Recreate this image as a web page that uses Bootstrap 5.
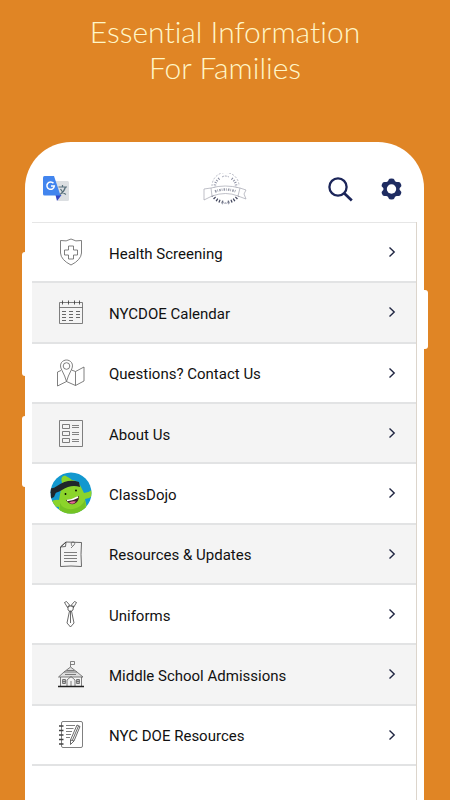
<!DOCTYPE html>
<html lang="en">
<head>
<meta charset="utf-8">
<meta name="viewport" content="width=device-width, initial-scale=1">
<title>Essential Information For Families</title>
<link rel="stylesheet" href="https://cdn.jsdelivr.net/npm/bootstrap@5.3.0/dist/css/bootstrap.min.css">
<style>
body { background: #e08525; font-family: Roboto, "Liberation Sans", sans-serif; }
.promo-title { color: #fff6c8; font: 300 30px/36px Lato, "Open Sans", sans-serif; font-variant-ligatures: none; padding: 13px 16px 57px; }
.phone { background: #fff; margin: 0 26px 0 25px; padding: 0 7px; border-radius: 46px 46px 0 0; }
.side-key { background: #fff; position: absolute; width: 8px; border-radius: 3px; }
.key-up { left: -3px; top: 110px; height: 124px; }
.key-down { left: -3px; top: 274px; height: 71px; }
.key-power { right: -4px; top: 148px; height: 59px; }
.app-bar { display: grid; grid-template-columns: 1fr auto 1fr; height: 80px; padding-top: 14px; }
.translate-tool { padding-left: 11px; }
.tools { gap: 28px; padding-right: 15px; }
.app-screen { border-right: 1px solid #dcd5cc; }
.menu-list { display: grid; grid-auto-rows: 1fr; min-height: 544px; border-top: 1px solid #e6e6e6; }
.menu-row { gap: 17px; padding: 0 20px 0 18px; color: #111; font-size: 15px; line-height: 20px; border-bottom: 2px solid #e2e3e4; }
.menu-row:nth-child(even) { background: #f4f4f4; }
.menu-row:hover { color: #111; }
.row-label { padding-top: 3px; }
.line-art { fill: none; stroke: #606060; stroke-width: .8; stroke-linejoin: round; }
svg { display: block; flex: none; }
</style>
<script src="https://cdn.jsdelivr.net/npm/bootstrap@5.3.0/dist/js/bootstrap.bundle.min.js"></script>
</head>
<body class="min-vh-100 d-flex flex-column">
<svg width="0" height="0" class="position-absolute" aria-hidden="true"><symbol id="chevron" viewBox="0 0 8 12"><path d="M1.500 1.500 6.200 6l-4.700 4.500" fill="none" stroke="#202642" stroke-width="1.400"/></symbol></svg>
<h1 class="promo-title text-center m-0">Essential Information<br>For Families</h1>
<main class="phone position-relative flex-grow-1 d-flex flex-column">
  <span class="side-key key-up"></span><span class="side-key key-down"></span><span class="side-key key-power"></span>
  <header class="app-bar align-items-center">
    <div class="translate-tool d-flex">
      <button type="button" class="btn p-0 border-0" aria-label="Translate">
        <svg width="26" height="26" viewBox="0 0 26 26">
          <path d="M11 5h13.500q1.500 0 1.500 1.500v17q0 1.500-1.500 1.500H15z" fill="#dcdfe2"/>
          <path d="M12.500 19h6L14 25z" fill="#3547c6"/>
          <path d="M1.500 0H11l6.500 19.500h-16Q0 19.500 0 18V1.500Q0 0 1.500 0z" fill="#4285ee"/>
          <path d="M10.500 7.300A3.700 3.700 0 1 0 11.300 10H8" fill="none" stroke="#fff" stroke-width="1.500"/>
          <path d="M15.500 11h8.500M19.500 9v2M22.500 11q-1.500 5-5.500 7.500M17.500 13q2 4 5.500 5.500" fill="none" stroke="#59717c" stroke-width="1.200"/>
        </svg>
      </button>
    </div>
    <svg width="44" height="32" viewBox="0 0 44 32" role="img" aria-label="School emblem">
      <g fill="none" stroke="#a5a8b6">
        <path d="M9 13a13.500 13.500 0 0 1 27 0" stroke-width=".8" stroke-dasharray="2 1.500"/>
        <path d="M12 15q-1-6 5-10M33 15q1-6-5-10" stroke="#8a8da0" stroke-width="2.500" stroke-dasharray="1 1.500"/>
        <path d="M9.500 22q3 6 12 7.500M35.500 22q-3 6-12 7.500" stroke="#44485f" stroke-width="3" stroke-dasharray="1.300 1.700"/>
        <path d="M19 4q3-2 7 0M19 29l7 2M26 29l-7 2" stroke-dasharray="2 1"/>
        <path d="M8 15q14-4 29 0l6 2-2 4 2 5-8-3q-12-5-26 0l-8 4V16l7-1zM8 15l1 8M37 15l-2 8" fill="#fff" stroke="#a4a5b0" stroke-width=".7"/>
        <path d="M12 18.500q10-4 21 0" stroke="#9598a6" stroke-width="2.500" stroke-dasharray="1.500 1 .7 1.200"/>
      </g>
    </svg>
    <div class="tools d-flex justify-content-end align-items-center">
      <button type="button" class="btn p-0 border-0" aria-label="Search">
        <svg width="25" height="25" viewBox="0 0 25 25" fill="none" stroke="#1b2559"><circle cx="10" cy="10" r="8.600" stroke-width="2.300"/><path d="m16.500 16.500 7.300 7" stroke-width="2.700"/></svg>
      </button>
      <button type="button" class="btn p-0 border-0" aria-label="Settings">
        <svg width="21" height="22" viewBox="0 0 21 22"><path d="M7.600 1.800Q8 .5 10.500.5t2.900 1.300l.6 1.400 1.600.9 1.600-.2c1.700-.1 2.200.8 2.700 2s.8 2.200-.3 3.200l-1 1.100v1.600l1 1.100c1.100 1 .8 2 .3 3.200s-1 2.100-2.700 2l-1.600-.2-1.600.9-.6 1.400q-.4 1.300-2.900 1.300t-2.900-1.300L7 18.800l-1.600-.9-1.600.2c-1.700.1-2.200-.8-2.700-2s-.8-2.200.3-3.200l1-1.100v-1.600l-1-1.100c-1.100-1-.8-2-.3-3.200s1-2.100 2.700-2l1.600.2L7 3.200z" fill="#1f2c61"/><circle cx="10.500" cy="11" r="4.700" fill="#fff"/></svg>
      </button>
    </div>
  </header>
  <div class="app-screen flex-grow-1">
  <nav class="menu-list" aria-label="Information">
    <a href="#" class="menu-row d-flex align-items-center text-decoration-none">
      <svg class="line-art" width="42" height="42" viewBox="0 0 42 42"><path d="M10.500 9.500q6 1.500 10.500-1.500 4.500 3 10.500 1.500V22q-.5 7-10.500 12Q11 29 10.500 22z"/><path d="M18.500 15h5v4h4v5h-4v4h-5v-4h-4v-5h4z"/></svg>
      <span class="row-label flex-grow-1">Health Screening</span><svg width="8" height="12"><use href="#chevron"/></svg>
    </a>
    <a href="#" class="menu-row d-flex align-items-center text-decoration-none">
      <svg class="line-art" width="42" height="42" viewBox="0 0 42 42"><path d="M9.500 11.500h23v21h-23zM9.500 16.500h23"/><path d="M12.500 9.500v4M18.500 9.500v4M24.500 9.500v4M29.500 9.500v4" stroke="#333"/><path d="M12 20.500h4m3 0h4m3 0h4M12 23.500h4m3 0h4m3 0h4M12 26.500h4m3 0h4m3 0h4M12 29.500h4m3 0h4" stroke="#444"/></svg>
      <span class="row-label flex-grow-1">NYCDOE Calendar</span><svg width="8" height="12"><use href="#chevron"/></svg>
    </a>
    <a href="#" class="menu-row d-flex align-items-center text-decoration-none">
      <svg class="line-art" width="42" height="42" viewBox="0 0 42 42"><path d="M11 18.500l-3.500 1.500v14l9-4.500 9 4 8.500-4.500V15l-8.500 4.500-4-1.500M25.500 19.500v14"/><path d="M16.500 29.500Q15 24 12 18.500c-4-7 1-10.500 4.500-10.500s8.500 3.500 4.500 10.500q-3 5.500-4.500 11z"/><circle cx="16.500" cy="14" r="3.300"/></svg>
      <span class="row-label flex-grow-1">Questions? Contact Us</span><svg width="8" height="12"><use href="#chevron"/></svg>
    </a>
    <a href="#" class="menu-row d-flex align-items-center text-decoration-none">
      <svg class="line-art" width="42" height="42" viewBox="0 0 42 42"><path d="M9.500 8.500h23v26h-23zM12.500 12.500h7v4h-7zM12.500 19.500h7v4h-7zM12.500 26.500h7v4h-7z"/><path d="M22 13.500h7m-7 2h7m-7 5h7m-7 2h7m-7 5h7m-7 2h7" stroke="#666"/></svg>
      <span class="row-label flex-grow-1">About Us</span><svg width="8" height="12"><use href="#chevron"/></svg>
    </a>
    <a href="#" class="menu-row d-flex align-items-center text-decoration-none">
      <svg width="42" height="42" viewBox="0 0 42 42"><defs><clipPath id="disc"><circle cx="21" cy="21" r="20.500"/></clipPath></defs>
        <g clip-path="url(#disc)"><path d="M0 0h42v42H0z" fill="#1298cf"/><path d="M12 11Q10 4 15 3.500q4 2 7 4.500 7 1 9 7l3 6q4 0 8-3v6q-3 3-7 3l2 9v8H8l1-9q-4-1-9 2v-7q5-3 9-2z" fill="#8bd42b"/><path d="M10 31q3 7 13 6 9-2 12-9l1 14H10z" fill="#75c324"/>
        <path d="M0 16q3 1 7-2Q18 6 29 10l1 5q-9-3-18 3-7 4-12 3z" fill="#20262b"/><path d="m1 19 7-3-4 9-4 2z" fill="#20262b"/>
        <path d="M16 28q7 0 13-4 0 6-5 8-5 1-8-4z" fill="#40202c"/><path d="M17 28.500q6-.5 11-3.500" fill="none" stroke="#fff" stroke-width="1.500"/><path d="M19 30.500q4-2 7-1-3 4-7 1z" fill="#e76d91"/><circle cx="15.500" cy="22" r=".9"/><circle cx="26" cy="18.500" r=".9"/></g></svg>
      <span class="row-label flex-grow-1">ClassDojo</span><svg width="8" height="12"><use href="#chevron"/></svg>
    </a>
    <a href="#" class="menu-row d-flex align-items-center text-decoration-none">
      <svg class="line-art" width="42" height="42" viewBox="0 0 42 42"><path d="M16 9l15.500.5-.5 12 .5 12-10.500-.5-10.500.5V14zM16 9l-.5 4.500-5 .5M10.500 14l5.500-5" stroke="#444"/><path d="M22 13q-2-4 1-4 3 0 1 3l-3 3M14 19.500h13m-13 3h13m-13 3h13m-13 3h13"/></svg>
      <span class="row-label flex-grow-1">Resources &amp; Updates</span><svg width="8" height="12"><use href="#chevron"/></svg>
    </a>
    <a href="#" class="menu-row d-flex align-items-center text-decoration-none">
      <svg class="line-art" width="42" height="42" viewBox="0 0 42 42"><path d="M14.500 9.500l2-1 3.500 4-2.500 2zM26.500 9.500l-2-1-3.500 4 2.500 2zM18 13h5.500l-.5 4-1.500 1h-2L18 17zM19.500 18l-2.500 12 3.500 4 3.500-4-2.500-12M20.500 18v12" stroke="#444"/></svg>
      <span class="row-label flex-grow-1">Uniforms</span><svg width="8" height="12"><use href="#chevron"/></svg>
    </a>
    <a href="#" class="menu-row d-flex align-items-center text-decoration-none">
      <svg class="line-art" width="42" height="42" viewBox="0 0 42 42"><path d="M20.500 14V8.500h4v3h-4" stroke="#666"/><path d="M14 19l6.500-5 6.500 5M14 19h13l6 5H8.500z" fill="#ddd"/><path d="M10.500 24v9M31.500 24v9M17 33v-6l4-3.500 4 3.500v6M21 33v-5M12.500 26.500h3v4h-3zM26.500 26.500h3v4h-3zM14 26v5M28 26v5M12.500 28.500h3M26.500 28.500h3M15 21.500h11M16.500 17.500h8"/><path d="M8 33.500h26" stroke="#222" stroke-width="1.500"/></svg>
      <span class="row-label flex-grow-1">Middle School Admissions</span><svg width="8" height="12"><use href="#chevron"/></svg>
    </a>
    <a href="#" class="menu-row d-flex align-items-center text-decoration-none">
      <svg class="line-art" width="42" height="42" viewBox="0 0 42 42"><rect x="11.500" y="7.500" width="21" height="26" rx="1.500"/><path d="M9 12h4.500M9 16.500h4.500M9 21h4.500M9 25.500h4.500M9 30h4.500" stroke="#444" stroke-width="1.300"/><path d="M16 11.500h9m-9 3h7.500m-7.500 3h6m-6 3h5m-5 3h4"/><path d="M27 11l3 1.500L24 27l-3.500 3.500V26zM20.500 26l3.500 1M28.500 12l-6 14" stroke="#444"/></svg>
      <span class="row-label flex-grow-1">NYC DOE Resources</span><svg width="8" height="12"><use href="#chevron"/></svg>
    </a>
  </nav>
  </div>
</main>
</body>
</html>
